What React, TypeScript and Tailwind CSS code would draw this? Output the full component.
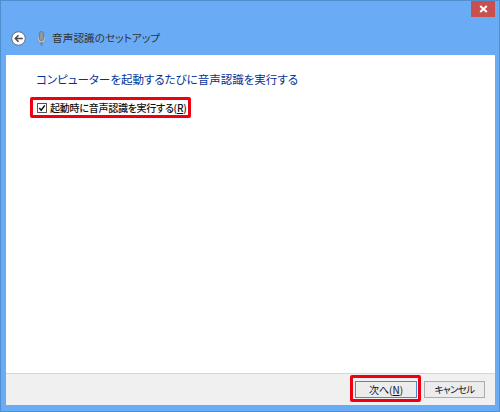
const jp = "font-['Noto_Sans_CJK_JP','Noto_Sans',sans-serif] [font-feature-settings:'palt']"

function BackIcon() {
  return (
    <svg width="15" height="15" viewBox="0 0 16 16">
      <circle cx="8" cy="8" r="7.2" fill="#fff" stroke="#5c6b7d" strokeWidth="1" />
      <path d="M12.5 8H5M8 4.6L4.6 8 8 11.4" fill="none" stroke="#4a4a4a" strokeWidth="1.6" />
    </svg>
  )
}

function MicIcon() {
  return (
    <svg width="9" height="15" viewBox="0 0 9 15">
      <path d="M0.8 6.5v1.6a3.7 3.7 0 0 0 7.4 0V6.5" fill="#d3dbe4" stroke="#8e98a4" strokeWidth="1" />
      <rect x="2.4" y="0.5" width="4.2" height="9.5" rx="2.1" fill="#8f98a3" stroke="#6a7480" strokeWidth="0.8" />
      <path d="M4.5 11.5V14.5" stroke="#6f7a86" strokeWidth="1.8" />
    </svg>
  )
}

export default function App() {
  return (
    <div className={`flex h-[412px] w-[500px] flex-col overflow-hidden border border-[#4f8fd0] bg-[#6aabf5] ${jp}`}>
      <div className="flex h-[17px] shrink-0 justify-end pr-[4px]">
        <div className="flex h-[16px] w-[24px] items-center justify-center bg-[#c9504e]">
          <svg width="9" height="8" viewBox="0 0 9 8">
            <path d="M1.2 1l6.6 6M7.8 1L1.2 7" stroke="#fff" strokeWidth="2" />
          </svg>
        </div>
      </div>

      <div className="flex h-[37px] shrink-0 items-center pl-[10px] pt-[3px]">
        <BackIcon />
        <span className="ml-[11px] flex"><MicIcon /></span>
        <span className="ml-[6px] text-[10.7px] leading-none text-[#333]">音声認識のセットアップ</span>
      </div>

      <div className="mr-[4px] ml-[5px] flex min-h-0 flex-1 flex-col bg-white">
        <div className="flex-1 pl-[30px] pt-[15px]">
          <h1 className="text-[11.5px] leading-[18px] font-normal text-[#003399]">
            コンピューターを起動するたびに音声認識を実行する
          </h1>
          <div className="mt-[9px] ml-[-6px] flex h-[21px] w-[161px] items-center rounded-[2px] border-[3px] border-[#ee0011] pl-[4px]">
            <div className="flex h-[10px] w-[10px] shrink-0 items-center justify-center border border-[#555] bg-white">
              <svg width="8" height="8" viewBox="0 0 9 9">
                <path d="M1.5 4.5L3.6 7 7.6 1.5" fill="none" stroke="#111" strokeWidth="1.6" />
              </svg>
            </div>
            <span className="ml-[3px] text-[10px] leading-none font-medium tracking-[-0.25px] whitespace-nowrap text-[#111]">
              起動時に音声認識を実行する(<span className="underline">R</span>)
            </span>
          </div>
        </div>

        <div className="flex h-[32px] shrink-0 items-center justify-end border-t border-[#d6d6d6] bg-[#f0f0f0] pr-[10px] pb-[2px]">
          <div className="flex h-[27px] w-[71px] items-center rounded-[2px] border-[3px] border-[#ee0011] pl-[2px] pt-[2px]">
            <button className="flex h-[17px] w-[62px] items-center justify-center border border-[#3c8fd6] bg-[#ececec] text-[10px] leading-none text-[#111]">
              次へ(<span className="underline">N</span>)
            </button>
          </div>
          <button className="mt-[2px] ml-[3px] flex h-[17px] w-[61px] items-center justify-center border border-[#acacac] bg-[#ececec] text-[9.5px] leading-none tracking-[-0.6px] text-[#111]">
            キャンセル
          </button>
        </div>
      </div>
      <div className="h-[6px] shrink-0" />
    </div>
  )
}
